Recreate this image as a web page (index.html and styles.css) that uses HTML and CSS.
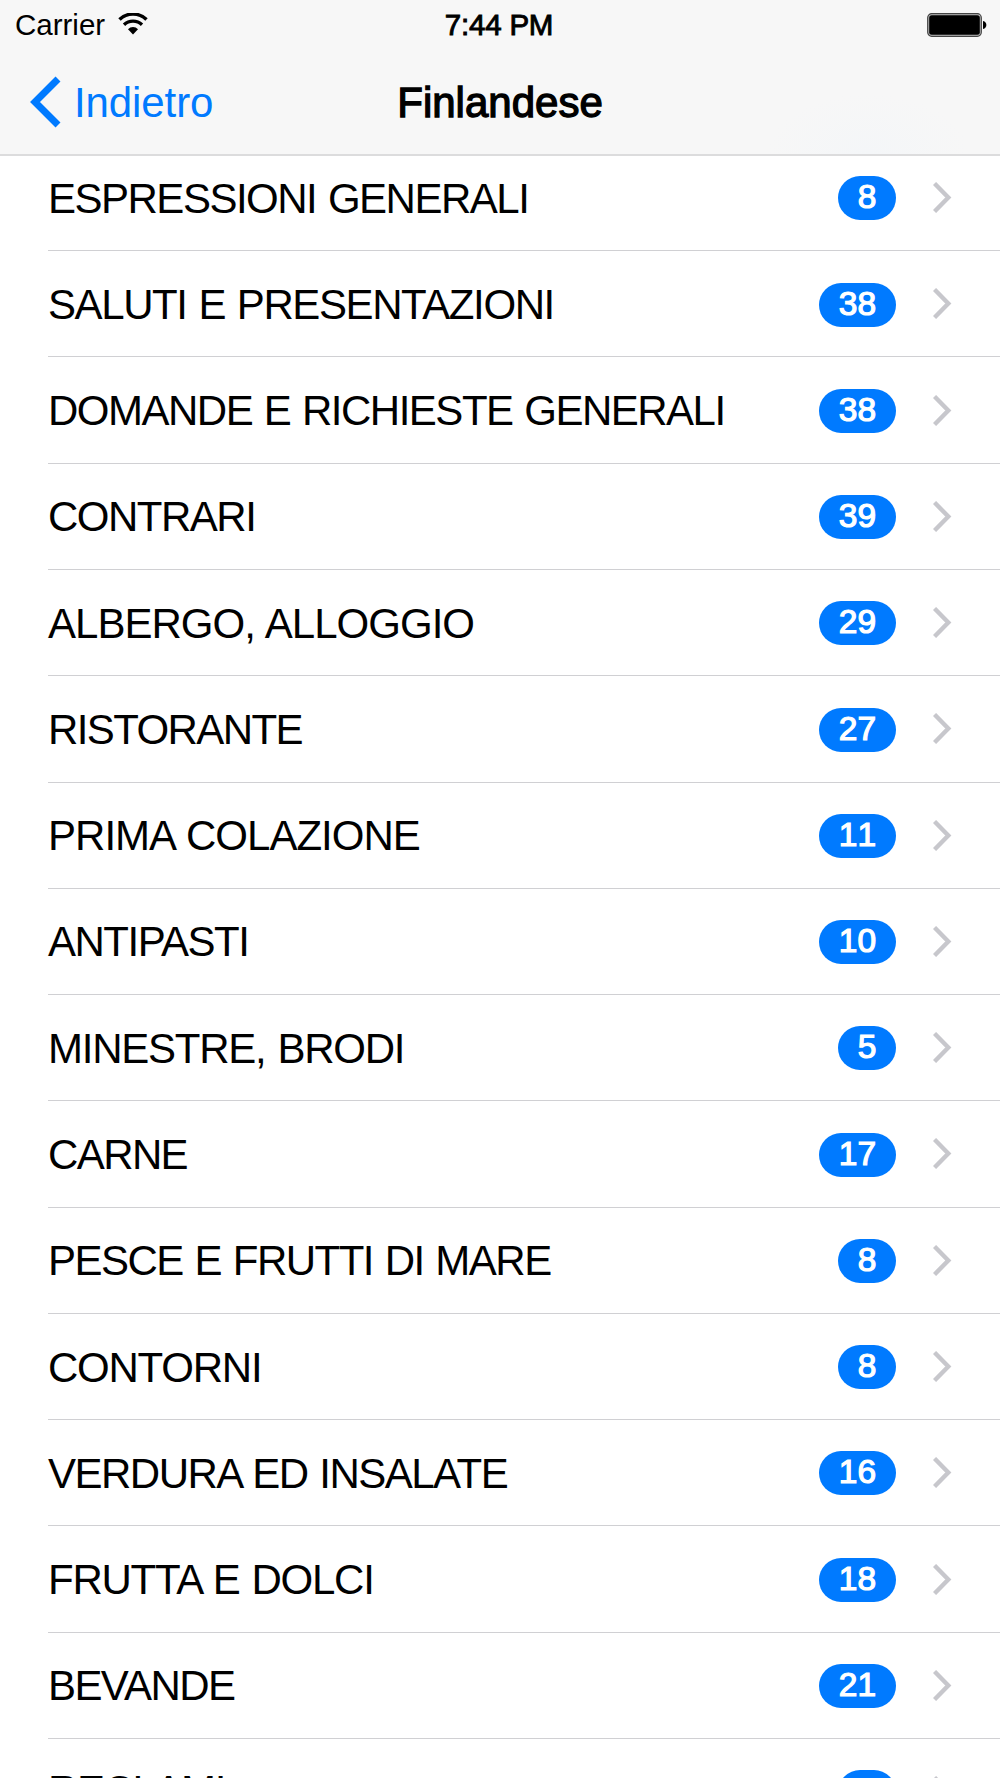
FILE: index.html
```html
<!DOCTYPE html>
<html lang="it">
<head>
<meta charset="utf-8">
<title>Finlandese</title>
<link rel="stylesheet" href="styles.css">
</head>
<body>
<svg class="defs" width="0" height="0"><symbol id="chev" viewBox="0 0 19 31"><path d="M1.500 1.500 15.300 15.500 1.500 29.500" fill="none" stroke="#c7c7cc" stroke-width="4.400"/></symbol></svg>
<header class="header">
  <div class="status">
    <div class="status-left"><span class="carrier">Carrier</span>
      <svg class="wifi" width="30" height="22" viewBox="0 0 30 22" fill="none" stroke="#000"><path d="M1.500 6.500a19.500 19.500 0 0 1 27 0" stroke-width="3.500"/><path d="M6 11.800a13 13 0 0 1 18 0" stroke-width="3.300"/><path d="M10 16.200a7 7 0 0 1 10 0L15 21.400z" fill="#000" stroke="none"/></svg>
    </div>
    <div class="clock">7:44 PM</div>
    <svg class="battery" width="60" height="24" viewBox="0 0 60 24"><rect x=".7" y=".7" width="53.600" height="22.600" rx="4" fill="#bbb" stroke="#444" stroke-width="1.200"/><rect x="2.200" y="2.200" width="50.600" height="19.600" rx="2.500"/><path d="M56 8c4.500 1 4.500 7 0 8z"/></svg>
  </div>
  <nav class="nav">
    <a class="back"><svg width="31" height="52" viewBox="0 0 31 52"><path d="M28 3 5 26 28 49" fill="none" stroke="#007aff" stroke-width="7"/></svg><span class="back-label">Indietro</span></a>
    <h1 class="title">Finlandese</h1>
    <span></span>
  </nav>
</header>
<ul class="list">
  <li class="row tight-4"><span class="label">ESPRESSIONI GENERALI</span><span class="badge short">8</span><svg class="chevron"><use href="#chev"/></svg></li>
  <li class="row tight-3"><span class="label">SALUTI E PRESENTAZIONI</span><span class="badge">38</span><svg class="chevron"><use href="#chev"/></svg></li>
  <li class="row tight-3b"><span class="label">DOMANDE E RICHIESTE GENERALI</span><span class="badge">38</span><svg class="chevron"><use href="#chev"/></svg></li>
  <li class="row tight-3b"><span class="label">CONTRARI</span><span class="badge">39</span><svg class="chevron"><use href="#chev"/></svg></li>
  <li class="row tight-1"><span class="label">ALBERGO, ALLOGGIO</span><span class="badge">29</span><svg class="chevron"><use href="#chev"/></svg></li>
  <li class="row tight-5"><span class="label">RISTORANTE</span><span class="badge">27</span><svg class="chevron"><use href="#chev"/></svg></li>
  <li class="row tight-1"><span class="label">PRIMA COLAZIONE</span><span class="badge">11</span><svg class="chevron"><use href="#chev"/></svg></li>
  <li class="row tight-3b"><span class="label">ANTIPASTI</span><span class="badge">10</span><svg class="chevron"><use href="#chev"/></svg></li>
  <li class="row tight-2"><span class="label">MINESTRE, BRODI</span><span class="badge short">5</span><svg class="chevron"><use href="#chev"/></svg></li>
  <li class="row tight-5"><span class="label">CARNE</span><span class="badge">17</span><svg class="chevron"><use href="#chev"/></svg></li>
  <li class="row tight-3b"><span class="label">PESCE E FRUTTI DI MARE</span><span class="badge short">8</span><svg class="chevron"><use href="#chev"/></svg></li>
  <li class="row tight-2"><span class="label">CONTORNI</span><span class="badge short">8</span><svg class="chevron"><use href="#chev"/></svg></li>
  <li class="row tight-4"><span class="label">VERDURA ED INSALATE</span><span class="badge">16</span><svg class="chevron"><use href="#chev"/></svg></li>
  <li class="row tight-2"><span class="label">FRUTTA E DOLCI</span><span class="badge">18</span><svg class="chevron"><use href="#chev"/></svg></li>
  <li class="row tight-5"><span class="label">BEVANDE</span><span class="badge">21</span><svg class="chevron"><use href="#chev"/></svg></li>
  <li class="row tight-3 last"><span class="label">RECLAMI</span><span class="badge short">9</span><svg class="chevron"><use href="#chev"/></svg></li>
</ul>
</body>
</html>
```
FILE: styles.css
```css
body {
  margin: 0;
  height: 1778px;
  overflow: hidden;
  background: #fff;
  color: #000;
  font-family: "Liberation Sans", Arial, sans-serif;
}
.defs { display: block; }

/* Status and navigation bars */
.header {
  box-sizing: border-box;
  height: 156px;
  background: #f7f7f7;
  background-image: radial-gradient(100px 60px at 868px 154px, #f4f6f8, #f7f7f7);
  border-bottom: 2px solid #dcdcdd;
}
.status {
  display: grid;
  grid-template-columns: 1fr auto 1fr;
  align-items: center;
  height: 50px;
  padding: 0 13px 0 15px;
  font-size: 29.5px;
}
.status-left { display: flex; align-items: center; gap: 13px; }
.wifi { margin-top: -2px; }
.battery { justify-self: end; }
.clock { padding-right: 4px; letter-spacing: -0.2px; -webkit-text-stroke: 0.9px #000; }
.nav {
  display: grid;
  grid-template-columns: 1fr auto 1fr;
  align-items: center;
  height: 104px;
  padding: 0 30px;
  font-size: 42px;
}
.back { display: flex; align-items: center; gap: 13px; color: #007aff; }
.back-label { padding-top: 2px; letter-spacing: -0.1px; }
.title {
  margin: 0;
  padding-top: 2px;
  font-size: 42px;
  font-weight: normal;
  letter-spacing: 0;
  -webkit-text-stroke: 1.3px #000;
}

/* Category list */
.list { list-style: none; margin: -11.05px 0 0; padding: 0; }
.row {
  display: flex;
  align-items: center;
  box-sizing: border-box;
  height: 106.28px;
  margin-left: 48px;
  padding-right: 48px;
  border-bottom: 1px solid #d0d0d3;
}
.label { flex: 1; padding-top: 2px; font-size: 42px; word-spacing: 1.5px; white-space: nowrap; }
.last .label { padding-top: 0; margin-top: -2px; }
.tight-1 .label { letter-spacing: -0.98px; }
.tight-2 .label { letter-spacing: -1.24px; }
.tight-3 .label { letter-spacing: -1.4px; }
.tight-3b .label { letter-spacing: -1.5px; }
.tight-4 .label { letter-spacing: -1.5px; }
.tight-5 .label { letter-spacing: -1.6px; }
.badge {
  width: 77px;
  height: 44px;
  margin-top: 1.4px;
  border-radius: 22px;
  background: #007aff;
  color: #fff;
  font-size: 33.5px;
  font-kerning: none;
  line-height: 42px;
  text-align: center;
  -webkit-text-stroke: 1.2px #fff;
}
.badge.short { width: 58px; }
.chevron { width: 19px; height: 31px; margin-left: 37px; }
```
